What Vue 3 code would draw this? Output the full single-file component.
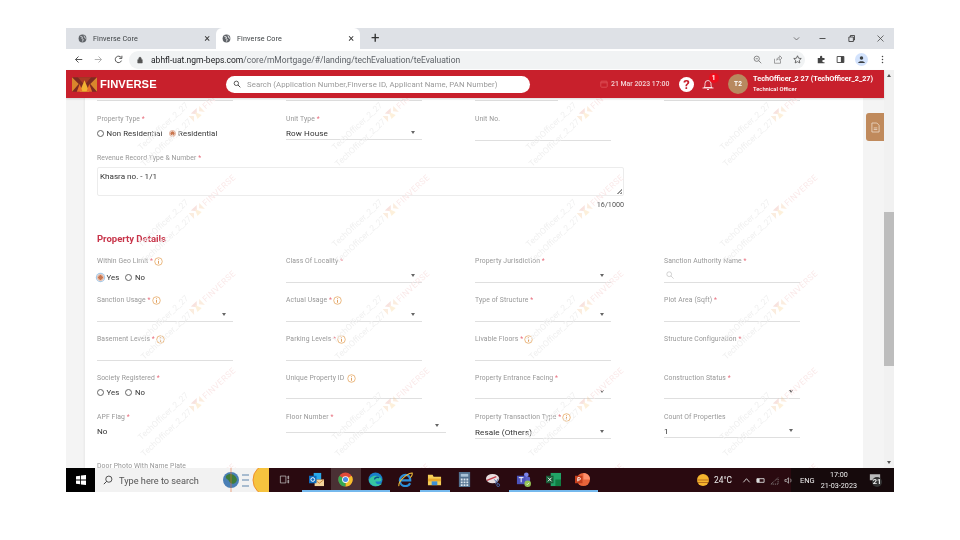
<template>
  <div class="shot">
    <div class="tabstrip">
      <div class="tab">
        <svg class="globe" viewBox="0 0 12 12"><circle cx="6" cy="6" r="5.2" fill="#5f6368" /><path d="M3 3l3 1-1 2 2 1-1 3M8 2l1 3 2 1" fill="none" stroke="#dee1e6" stroke-width="1.1" /></svg>
        <span class="tab-title">Finverse Core</span>
        <span class="tab-x">×</span>
      </div>
      <div class="tab active">
        <svg class="globe" viewBox="0 0 12 12"><circle cx="6" cy="6" r="5.2" fill="#5f6368" /><path d="M3 3l3 1-1 2 2 1-1 3M8 2l1 3 2 1" fill="none" stroke="#fff" stroke-width="1.1" /></svg>
        <span class="tab-title">Finverse Core</span>
        <span class="tab-x">×</span>
      </div>
      <span class="new-tab">+</span>
      <div class="win-ctrls">
        <svg viewBox="0 0 12 12"><path d="M2.5 4.5L6 8l3.5-3.5" fill="none" stroke="#555" /></svg>
        <svg viewBox="0 0 12 12"><path d="M2 6h8" stroke="#333" stroke-width="1.1" /></svg>
        <svg viewBox="0 0 12 12"><path d="M2.5 4h6v6h-6zM4.500 4V2h5.500v6H8.500" fill="none" stroke="#333" stroke-width="1.1" /></svg>
        <svg viewBox="0 0 12 12"><path d="M2 2l8 8M10 2l-8 8" stroke="#444" /></svg>
      </div>
    </div>

    <div class="toolbar">
      <svg class="nav" viewBox="0 0 12 12"><path d="M11 6H2M6 2L2 6l4 4" fill="none" stroke="#444" stroke-width="1.2" /></svg>
      <svg class="nav" viewBox="0 0 12 12"><path d="M1 6h9M6 2l4 4-4 4" fill="none" stroke="#aaa" stroke-width="1.2" /></svg>
      <svg class="nav" viewBox="0 0 12 12"><path d="M10 7.500A4.300 4.300 0 1 1 9.600 3.500M10.500 1v3.500H7" fill="none" stroke="#444" stroke-width="1.2" /></svg>
      <div class="omnibox">
        <svg class="lock" viewBox="0 0 8 10"><path d="M1 4.500h6V9H1zM2.300 4.500V3a1.700 1.700 0 0 1 3.400 0v1.500" fill="#555" stroke="#555" stroke-width=".7" /></svg>
        <span class="url"><b>abhfl-uat.ngm-beps.com</b>/core/mMortgage/#/landing/techEvaluation/teEvaluation</span>
        <span class="omni-icons">
          <svg viewBox="0 0 12 12"><circle cx="5" cy="5" r="3.500" fill="none" stroke="#666" /><path d="M7.500 7.500L11 11M3.500 5h3" stroke="#666" /></svg>
          <svg viewBox="0 0 12 12"><path d="M2 5v6h8V7M5 7c0-3 2-4 4-4V1l3 3-3 3V5C7 5 6 6 5 7z" fill="none" stroke="#777" stroke-width=".9" /></svg>
          <svg viewBox="0 0 12 12"><path d="M6 1l1.500 3.300 3.500.4-2.600 2.400.7 3.500L6 8.900 2.900 10.600l.7-3.500L1 4.700l3.500-.4z" fill="none" stroke="#444" stroke-width="1" /></svg>
        </span>
      </div>
      <span class="ext-icons">
        <svg viewBox="0 0 12 12"><path d="M1 4h3V2.500a1.500 1.500 0 0 1 3 0V4h3v2.500H8.500a1.500 1.500 0 0 0 0 3H10V11H1z" fill="#444" /></svg>
        <svg viewBox="0 0 12 12"><path d="M1.500 2h9v8h-9z" fill="none" stroke="#444" stroke-width="1.200" /><path d="M6.500 2h4v8h-4z" fill="#444" /></svg>
        <span class="profile"><svg viewBox="0 0 12 12"><circle cx="6" cy="4" r="2.300" fill="#3c4043" /><path d="M1.500 10.500c0-3 9-3 9 0z" fill="#3c4043" /></svg></span>
        <svg viewBox="0 0 12 12"><circle cx="6" cy="2" r="1" fill="#444" /><circle cx="6" cy="6" r="1" fill="#444" /><circle cx="6" cy="10" r="1" fill="#444" /></svg>
      </span>
    </div>

    <div class="viewport">
      <div class="app">
        <header class="topbar">
          <svg class="brand-logo" viewBox="0 0 26 15">
            <rect width="26" height="15" fill="#7d2a22" />
            <path d="M0 0l7 7-7 8zM26 0l-7 7 7 8z" fill="#d9862c" />
            <path d="M6 0h14l-7 8z" fill="#a93a24" />
            <path d="M13 3l5 12H8z" fill="#f2b233" />
            <path d="M5 15l3-8 3 8zM15 15l3-8 3 8z" fill="#e8702a" />
          </svg>
          <span class="brand-name">FINVERSE</span>
          <div class="searchbar">
            <svg viewBox="0 0 12 12"><circle cx="5" cy="5" r="3.300" fill="none" stroke="#444" stroke-width="1.300" /><path d="M7.500 7.500L11 11" stroke="#444" stroke-width="1.500" /></svg>
            <span>Search (Application Number,Finverse ID, Applicant Name, PAN Number)</span>
          </div>
          <div class="top-right">
            <svg class="cal" viewBox="0 0 10 10"><rect x="1" y="1.500" width="8" height="7.500" rx="1" fill="none" stroke="#e0555c" /><path d="M1 3.500h8" stroke="#e0555c" /></svg>
            <span class="stamp">21 Mar 2023 17:00</span>
            <span class="help">?</span>
            <span class="bell">
              <svg viewBox="0 0 14 14"><path d="M3 10.500c1-1 1-2 1-4a3 3 0 0 1 6 0c0 2 0 3 1 4zM1.500 11h11M6 12.500h2" fill="none" stroke="#fff" stroke-width=".8" /></svg>
              <i>1</i>
            </span>
            <span class="avatar">T2</span>
            <div class="who">
              <div class="who-name">TechOfficer_2 27 (TechOfficer_2_27)</div>
              <div class="who-role">Technical Officer</div>
            </div>
          </div>
        </header>

        <div class="scroller">
          <div class="card">
            <div class="cut-row">
              <span></span><span></span><span class="short"></span><span></span>
            </div>

            <div class="form-grid">
              <div class="field">
                <label>Property Type <em>*</em></label>
                <div class="radios">
                  <span class="radio"></span>Non Residential
                  <span class="radio on"></span>Residential
                </div>
              </div>
              <div class="field">
                <label>Unit Type <em>*</em></label>
                <div class="control select tight">Row House</div>
              </div>
              <div class="field">
                <label>Unit No.</label>
                <div class="control"></div>
              </div>
            </div>

            <div class="revenue">
              <label>Revenue Record Type &amp; Number <em>*</em></label>
              <div class="textbox">Khasra no. - 1/1<i class="grip"></i></div>
              <div class="count">16/1000</div>
            </div>

            <h3 class="section">Property Details</h3>

            <div class="form-grid">
              <div v-for="f in fields" :key="f.label" class="field">
                <label>{{ f.label }} <em v-if="f.req">*</em>
                  <svg v-if="f.info" class="info" viewBox="0 0 10 10"><circle cx="5" cy="5" r="4.200" fill="none" stroke="#e5a055" stroke-width=".8" /><path d="M5 2.500v.8M5 4.200v3.300" stroke="#d98a3a" stroke-width=".9" /></svg>
                </label>
                <div v-if="f.type === 'radio'" class="radios" :class="{ low: f.checked }">
                  <span class="radio" :class="{ focus: f.checked }"></span>Yes
                  <span class="radio"></span>No
                </div>
                <div v-else-if="f.type === 'plain'" class="plain">{{ f.value }}</div>
                <div v-else class="control" :class="[f.type, f.mod]">
                  <svg v-if="f.type === 'search'" class="lens" viewBox="0 0 10 10"><circle cx="4" cy="4" r="3" fill="none" stroke="#bbb" stroke-width=".8" /><path d="M6.200 6.200L9.500 9.500" stroke="#bbb" stroke-width=".8" /></svg>
                  {{ f.value }}
                </div>
              </div>
            </div>

            <label class="door">Door Photo With Name Plate</label>
          </div>

          <div class="side-rail">
            <button class="doc-tab">
              <svg viewBox="0 0 10 12"><path d="M1 1h5.500L9 3.500V11H1z" fill="none" stroke="#f3e4d6" stroke-width=".8" /><path d="M3 6.500h4M3 8.300h4" stroke="#f3e4d6" stroke-width=".8" /></svg>
            </button>
          </div>

          <div class="watermarks">
            <div v-for="m in marks" :key="m.key" class="mark" :style="{ left: m.x + 'px', top: m.y + 'px' }">
              <div class="mark-up">TechOfficer_2_27</div>
              <div class="mark-low">TechOfficer_2_27
                <svg viewBox="0 0 26 15"><path d="M0 0l7 7-7 8zM26 0l-7 7 7 8z" fill="#f0b070" /><path d="M6 0h14l-7 8z" fill="#e08070" /><path d="M13 3l5 12H8z" fill="#f7c060" /></svg>
                <span>FINVERSE</span>
              </div>
            </div>
          </div>
        </div>
      </div>

      <div class="scrollbar">
        <span class="arrow up"></span>
        <span class="thumb"></span>
        <span class="arrow down"></span>
      </div>
    </div>

    <footer class="taskbar">
      <div class="start">
        <svg viewBox="0 0 12 12"><path d="M0 1.500l5-.7v4.700H0zM6 .7L12 0v5.500H6zM0 6.500h5v4.700l-5-.7zM6 6.500h6V12l-6-.7z" fill="#fff" /></svg>
      </div>
      <div class="task-search">
        <svg viewBox="0 0 12 12"><circle cx="7" cy="5" r="3.700" fill="none" stroke="#333" /><path d="M4.300 7.700L1 11" stroke="#333" stroke-width="1.100" /></svg>
        <span>Type here to search</span>
        <svg class="banner" viewBox="0 0 46 24">
          <circle cx="8" cy="12" r="8" fill="#4a7fb5" />
          <path d="M3 8c3-3 7-2 9 0s3 5 0 7-5 0-6-2-4-2-3-5z" fill="#3f7d3a" />
          <path d="M8 0v24" stroke="#e8703a" stroke-width=".6" />
          <path d="M19 7h7M19 12h7M19 18h7" stroke="#8fa9c4" stroke-width="1.300" />
          <circle cx="46" cy="12" r="16" fill="#f6c33f" stroke="#ee8f2d" />
        </svg>
      </div>
      <div class="task-apps">
        <span v-for="a in apps" :key="a.id" class="app-slot" :class="{ running: a.running, current: a.id === 'chrome' }">
          <svg v-if="a.id === 'view'" class="small" viewBox="0 0 16 16"><path d="M2 3h8v10H2zM13 3h1v4h-1zM13 9h1v4h-1z" fill="none" stroke="#ccc" /></svg>
          <svg v-else-if="a.id === 'outlook'" viewBox="0 0 16 16"><rect x="5" y="1" width="8" height="7" fill="#28a8ea" /><rect x="6" y="8" width="10" height="7" fill="#f5d39b" /><path d="M6 8l5 4 5-4" fill="none" stroke="#c9863f" /><rect x="0" y="4" width="8" height="8" fill="#0f6cbd" /><circle cx="4" cy="8" r="2" fill="none" stroke="#fff" /></svg>
          <svg v-else-if="a.id === 'chrome'" viewBox="0 0 16 16"><circle cx="8" cy="8" r="7.500" fill="#e04a3a" /><path d="M8 8L14.500 4A7.500 7.500 0 0 1 8 15.500z" fill="#f6c02c" /><path d="M8 8L8 15.500A7.500 7.500 0 0 1 1.500 4z" fill="#35a853" /><circle cx="8" cy="8" r="3.600" fill="#fff" /><circle cx="8" cy="8" r="2.700" fill="#4a8be8" /></svg>
          <svg v-else-if="a.id === 'edge'" viewBox="0 0 16 16"><circle cx="8" cy="8" r="7.500" fill="#1a7fc9" /><path d="M1 9c1-5 10-7 13-2 1 2 0 3-2 3H8c0 3 4 4 7 2-2 4-12 5-14-3z" fill="#37c6a0" /><path d="M7 8c0-2 3-3 5-2" fill="none" stroke="#0a4f8f" stroke-width="1.500" /></svg>
          <svg v-else-if="a.id === 'ie'" viewBox="0 0 16 16"><path d="M2 9h11c0-4-2-6-5-6S2 6 2 9c0 4 3 6 6 6 2 0 4-1 5-3" fill="none" stroke="#2b8fd8" stroke-width="2.400" /><path d="M1 15C0 11 8 2 15 1c1 2-1 4-2 5" fill="none" stroke="#f2bf3a" stroke-width="1.100" /></svg>
          <svg v-else-if="a.id === 'files'" viewBox="0 0 16 16"><path d="M1 3h5l1 2h8v9H1z" fill="#f6cf57" /><rect x="1" y="7" width="14" height="3" fill="#e9a92c" /><rect x="5" y="10" width="6" height="4" fill="#3d8fd6" /></svg>
          <svg v-else-if="a.id === 'calc'" viewBox="0 0 16 16"><rect x="2" y="0" width="12" height="16" fill="#53718f" /><rect x="4" y="2" width="8" height="3" fill="#a9c2d8" /><path d="M4 7h2v2H4zM7 7h2v2H7zM10 7h2v2h-2zM4 10h2v2H4zM7 10h2v2H7zM10 10h2v2h-2zM4 13h2v2H4zM7 13h2v2H7zM10 13h2v2h-2z" fill="#dbe6ef" /></svg>
          <svg v-else-if="a.id === 'snip'" viewBox="0 0 16 16"><ellipse cx="7" cy="7" rx="7" ry="5" fill="#e9dfe0" /><path d="M1 9l10-4" stroke="#c63c4c" stroke-width="1.500" /><path d="M9 8l4 5M13 7l-3 6" stroke="#4866a8" /><circle cx="13" cy="14" r="1.500" fill="none" stroke="#4866a8" /></svg>
          <svg v-else-if="a.id === 'teams'" viewBox="0 0 16 16"><circle cx="11" cy="3" r="2.500" fill="#7b83eb" /><rect x="7" y="5" width="8" height="8" rx="1.500" fill="#5b5fc7" /><rect x="1" y="4" width="9" height="9" fill="#4b53bc" /><path d="M3 6h5M5.500 6v5" stroke="#fff" /><circle cx="12.500" cy="12.500" r="3.500" fill="#92c353" /><path d="M11 12.500l1 1 2-2" fill="none" stroke="#fff" stroke-width=".8" /></svg>
          <svg v-else-if="a.id === 'excel'" viewBox="0 0 16 16"><rect x="5" y="1" width="11" height="14" fill="#21a366" /><rect x="10" y="8" width="6" height="7" fill="#107c41" /><rect x="0" y="4" width="8" height="8" fill="#185c37" /><path d="M2 6l4 4M6 6l-4 4" stroke="#fff" /></svg>
          <svg v-else viewBox="0 0 16 16"><circle cx="9" cy="8" r="7" fill="#e8643a" /><path d="M9 1a7 7 0 0 1 7 7H9z" fill="#ff8f6b" /><rect x="0" y="4" width="8" height="8" fill="#c43e1c" /><path d="M3 10V6h1.500a1.200 1.200 0 0 1 0 2.500H3" fill="none" stroke="#fff" /></svg>
        </span>
      </div>
      <div class="tray">
        <svg class="sun" viewBox="0 0 14 12"><circle cx="7" cy="6" r="6" fill="#f5b52e" /><path d="M1 6h12M2 8.500h10" stroke="#b9711c" /></svg>
        <span class="temp">24°C</span>
        <svg viewBox="0 0 10 10"><path d="M1.500 7L5 3l3.500 4" fill="none" stroke="#ddd" /></svg>
        <svg viewBox="0 0 10 10"><path d="M1 3h8v4H1z" fill="none" stroke="#ddd" /><path d="M1 3h3v4H1z" fill="#ddd" /></svg>
        <svg viewBox="0 0 10 10"><path d="M1 9L9 2v7z" fill="none" stroke="#999" stroke-dasharray="1 1" /></svg>
        <svg viewBox="0 0 10 10"><path d="M1 4h2l2-2v6L3 6H1zM7 3c1 1 1 3 0 4" fill="none" stroke="#ccc" stroke-width=".8" /></svg>
        <span class="lang">ENG</span>
        <div class="clock"><div>17:00</div><div>21-03-2023</div></div>
        <span class="notify">
          <svg viewBox="0 0 14 12"><path d="M1 1h12v7H6l-2 3V8H1z" fill="#bbb" /></svg>
          <i>21</i>
        </span>
      </div>
    </footer>
  </div>
</template>

<script setup>
const fields = [
  { label: 'Within Geo Limit', req: true, info: true, type: 'radio', checked: true },
  { label: 'Class Of Locality', req: true, type: 'select' },
  { label: 'Property Jurisdiction', req: true, type: 'select' },
  { label: 'Sanction Authority Name', req: true, type: 'search' },
  { label: 'Sanction Usage', req: true, info: true, type: 'select' },
  { label: 'Actual Usage', req: true, info: true, type: 'select' },
  { label: 'Type of Structure', req: true, type: 'select' },
  { label: 'Plot Area (Sqft)', req: true, type: 'input' },
  { label: 'Basement Levels', req: true, info: true, type: 'input' },
  { label: 'Parking Levels', req: true, info: true, type: 'input' },
  { label: 'Livable Floors', req: true, info: true, type: 'input' },
  { label: 'Structure Configuration', req: true, type: 'blank' },
  { label: 'Society Registered', req: true, type: 'radio' },
  { label: 'Unique Property ID', info: true, type: 'input', mod: 'tight' },
  { label: 'Property Entrance Facing', req: true, type: 'select', mod: 'tight' },
  { label: 'Construction Status', req: true, type: 'select', mod: 'tight' },
  { label: 'APF Flag', req: true, type: 'plain', value: 'No' },
  { label: 'Floor Number', req: true, type: 'select', mod: 'wide' },
  { label: 'Property Transaction Type', req: true, info: true, type: 'select', value: 'Resale (Others)' },
  { label: 'Count Of Properties', type: 'select', mod: 'tight', value: '1' }
]

const apps = [
  { id: 'view' },
  { id: 'outlook', running: true },
  { id: 'chrome', running: true },
  { id: 'edge', running: true },
  { id: 'ie' },
  { id: 'files', running: true },
  { id: 'calc' },
  { id: 'snip' },
  { id: 'teams', running: true },
  { id: 'excel', running: true },
  { id: 'ppt', running: true }
]

// watermark repeats every 194 x 97 across the scrolling area
const marks = []
for (let row = 0; row < 5; row++) {
  for (let col = 0; col < 4; col++) {
    marks.push({ key: row + '-' + col, x: col * 194 + 46, y: row * 96.5 - 5 })
  }
}
</script>

<style>
html, body {
  margin: 0;
  background: #fff;
}
</style>

<style scoped>
.shot {
  width: 828px;
  height: 464px;
  margin: 28px 0 0 66px;
  overflow: hidden;
  display: flex;
  flex-direction: column;
  font-family: Roboto, "Liberation Sans", sans-serif;
  filter: blur(0.45px);
  background: #fff;
}

/* browser chrome */
.tabstrip {
  height: 21px;
  flex: none;
  background: #dee1e6;
  display: flex;
  align-items: flex-end;
  padding-left: 6px;
  color: #3c4043;
}
.tab {
  width: 144px;
  height: 21px;
  display: flex;
  align-items: center;
  padding: 0 6px 0 6px;
  box-sizing: border-box;
  border-radius: 6px 6px 0 0;
}
.tab.active {
  background: #fff;
}
.globe {
  width: 9px;
  height: 9px;
  margin-right: 6px;
}
.tab-title {
  flex: 1;
  font-size: 7.2px;
  letter-spacing: 0.1px;
}
.tab-x {
  font-size: 11px;
  line-height: 11px;
  color: #333;
}
.new-tab {
  align-self: center;
  margin-left: 11px;
  font-size: 15px;
  line-height: 15px;
  color: #333;
}
.win-ctrls {
  margin-left: auto;
  align-self: center;
  display: flex;
  gap: 20px;
  padding-right: 9px;
}
.win-ctrls svg {
  width: 9px;
  height: 9px;
}
.win-ctrls svg:first-child {
  margin-right: -3px;
}

.toolbar {
  height: 21px;
  flex: none;
  background: #fff;
  display: flex;
  align-items: center;
  padding-left: 8px;
  box-sizing: border-box;
}
.nav {
  width: 9px;
  height: 9px;
  margin-right: 11px;
}
.omnibox {
  width: 676px;
  height: 18px;
  margin-left: -5px;
  background: #f1f3f4;
  border-radius: 9px;
  display: flex;
  align-items: center;
  padding: 0 0 0 8px;
  box-sizing: border-box;
}
.lock {
  width: 6px;
  height: 8px;
  margin-right: 8px;
}
.url {
  font-size: 8.5px;
  color: #5f6368;
}
.url b {
  font-weight: 400;
  color: #202124;
}
.omni-icons {
  margin-left: auto;
  display: flex;
  gap: 11px;
  padding-right: 3px;
}
.omni-icons svg {
  width: 9px;
  height: 9px;
}
.ext-icons {
  display: flex;
  align-items: center;
  gap: 10px;
  margin-left: 11.5px;
}
.ext-icons > svg {
  width: 9px;
  height: 9px;
}
.profile {
  width: 13px;
  height: 13px;
  border-radius: 50%;
  background: #d3e3fd;
  display: flex;
  align-items: center;
  justify-content: center;
}
.profile svg {
  width: 9px;
  height: 9px;
}

/* page */
.viewport {
  flex: 1;
  display: flex;
  min-height: 0;
}
.app {
  flex: 1;
  display: flex;
  flex-direction: column;
  min-width: 0;
}
.scrollbar {
  width: 10px;
  flex: none;
  background: #f1f1f1;
  position: relative;
}
.thumb {
  position: absolute;
  left: 0;
  right: 0;
  top: 142px;
  height: 154px;
  background: #bdbdbd;
}
.arrow {
  position: absolute;
  left: 2.5px;
  border-left: 2.5px solid transparent;
  border-right: 2.5px solid transparent;
}
.arrow.up {
  top: 4px;
  border-bottom: 3px solid #555;
}
.arrow.down {
  bottom: 4px;
  border-top: 3px solid #555;
}

.topbar {
  height: 28px;
  flex: none;
  background: #c8202c;
  display: flex;
  align-items: center;
  padding-left: 6px;
  color: #fff;
  box-shadow: 0 1px 2px rgba(0, 0, 0, 0.15);
  position: relative;
  z-index: 3;
}
.brand-logo {
  width: 25px;
  height: 15px;
}
.brand-name {
  width: 126px;
  margin-left: 3px;
  font-family: "Liberation Sans", sans-serif;
  font-weight: 700;
  font-size: 11.2px;
  letter-spacing: 0.1px;
}
.searchbar {
  width: 304px;
  height: 17px;
  background: #fff;
  border-radius: 9px;
  display: flex;
  align-items: center;
  padding-left: 7px;
  box-sizing: border-box;
  color: #999;
  font-size: 7.8px;
  letter-spacing: 0.06px;
}
.searchbar svg {
  width: 8px;
  height: 8px;
  margin-right: 6px;
}
.top-right {
  display: flex;
  align-items: center;
  margin-left: 70px;
}
.cal {
  width: 8px;
  height: 8px;
  margin-right: 3px;
}
.stamp {
  width: 57px;
  font-size: 6.9px;
  font-weight: 500;
  color: #f3d4d6;
  white-space: nowrap;
}
.help {
  width: 15px;
  height: 15px;
  border-radius: 50%;
  background: #fff;
  color: #c8202c;
  font-size: 13px;
  font-weight: 700;
  line-height: 15px;
  text-align: center;
  margin-left: 11px;
}
.bell {
  position: relative;
  width: 14px;
  height: 14px;
  margin-left: 7px;
}
.bell svg {
  width: 14px;
  height: 14px;
  display: block;
}
.bell i {
  position: absolute;
  left: 7.5px;
  top: -4px;
  width: 10px;
  height: 10px;
  border-radius: 50%;
  background: #ee0d1c;
  font-style: normal;
  font-size: 6.5px;
  font-weight: 700;
  line-height: 10px;
  text-align: center;
}
.avatar {
  width: 20px;
  height: 20px;
  border-radius: 50%;
  background: #b8895f;
  font-size: 6.5px;
  font-weight: 700;
  line-height: 20px;
  text-align: center;
  margin-left: 13px;
}
.who {
  margin-left: 5px;
  white-space: nowrap;
}
.who-name {
  font-size: 7.3px;
  font-weight: 700;
  line-height: 10px;
}
.who-role {
  font-size: 5.8px;
  font-weight: 500;
  line-height: 9px;
  margin-top: 1px;
}

.scroller {
  flex: 1;
  min-height: 0;
  display: flex;
  background: #f4f4f4;
  padding-left: 19px;
  position: relative;
  overflow: hidden;
}
.card {
  width: 778px;
  flex: none;
  background: #fff;
  padding: 0 12px;
  box-sizing: border-box;
  box-shadow: -1px 0 2px rgba(0, 0, 0, 0.05);
}
.side-rail {
  flex: 1;
  padding-top: 15px;
}
.doc-tab {
  display: block;
  width: 18px;
  height: 28px;
  margin-left: 3px;
  padding: 0;
  border: 0;
  border-radius: 3px 0 0 3px;
  background: #c08a5c;
}
.doc-tab svg {
  width: 9px;
  height: 11px;
  display: block;
  margin: 0 auto;
}

.cut-row {
  display: grid;
  grid-template-columns: repeat(4, 136px);
  column-gap: 53px;
  height: 3px;
  margin-bottom: 11px;
}
.cut-row span {
  border-bottom: 1px solid #dedede;
}
.cut-row .short {
  width: 83px;
}

.form-grid {
  display: grid;
  grid-template-columns: repeat(4, 136px);
  column-gap: 53px;
  grid-auto-rows: 39px;
}
label {
  display: block;
  height: 14px;
  font-size: 6.8px;
  line-height: 14px;
  color: #979797;
  letter-spacing: 0.1px;
  white-space: nowrap;
}
label em {
  color: #e8707f;
  font-style: normal;
}
.info {
  width: 9px;
  height: 9px;
  vertical-align: -2.5px;
  margin-left: 1px;
}
.control {
  height: 14px;
  border-bottom: 1px solid #dfdfdf;
  position: relative;
  font-size: 8.1px;
  line-height: 14px;
  color: #333;
  letter-spacing: 0.1px;
}
.control.select {
  padding-top: 1px;
  height: 13px;
}
.control.select::after {
  content: "";
  position: absolute;
  right: 7px;
  top: 6px;
  border-left: 2px solid transparent;
  border-right: 2px solid transparent;
  border-top: 3px solid #666;
}
.control.blank {
  border-bottom: 0;
}
.control.tight {
  margin-top: -1px;
}
.control.wide {
  width: 160px;
  margin-top: -6px;
}
.lens {
  width: 8px;
  height: 8px;
  position: absolute;
  left: 2px;
  top: 3px;
}
.radios {
  display: flex;
  align-items: center;
  height: 14px;
  font-size: 7.8px;
  color: #333;
  letter-spacing: 0.1px;
}
.radios.low {
  margin-top: 2px;
}
.radio {
  width: 7px;
  height: 7px;
  box-sizing: border-box;
  border: 0.6px solid #666;
  border-radius: 50%;
  margin-right: 2.5px;
  background: #fff;
  flex: none;
}
.radios .radio:not(:first-child) {
  margin-left: 6px;
}
.radio.on,
.radio.focus {
  background: radial-gradient(circle, #c9764f 0 1.8px, #fbeee6 2.4px);
  border-color: #e0ad98;
}
.radio.focus {
  box-shadow: 0 0 0 1.2px #a8cbe8;
  background: radial-gradient(circle, #c9764f 0 2px, #f3e6da 2.6px);
}
.plain {
  height: 14px;
  line-height: 14px;
  font-size: 8.1px;
  color: #333;
}

.revenue {
  height: 59px;
}
.textbox {
  width: 527px;
  height: 29px;
  margin-top: 2px;
  box-sizing: border-box;
  border: 1px solid #ececec;
  border-radius: 2px;
  padding: 3px 2px;
  font-size: 8.1px;
  line-height: 11px;
  color: #333;
  position: relative;
}
.grip {
  position: absolute;
  right: 1px;
  bottom: 1px;
  width: 5px;
  height: 5px;
  background: linear-gradient(135deg, transparent 50%, #999 50% 62%, transparent 62% 78%, #999 78%);
}
.count {
  width: 527px;
  margin-top: 4px;
  text-align: right;
  font-size: 7.2px;
  line-height: 10px;
  color: #555;
}
.section {
  margin: 23px 0 9px;
  font-size: 9.5px;
  line-height: 12px;
  font-weight: 700;
  color: #c8354a;
}
.door {
  margin-top: 10px;
}

/* overlay: diagonal user watermark */
.watermarks {
  position: absolute;
  inset: 0;
  overflow: hidden;
  pointer-events: none;
}
.mark {
  position: absolute;
  width: 170px;
  height: 44px;
  transform: rotate(-43deg);
  font-size: 8.5px;
  line-height: 14px;
  color: #f0f0f0;
  white-space: nowrap;
}
.mark-up {
  height: 14px;
  padding-left: 20px;
}
.mark-low {
  height: 14px;
  padding-left: 11px;
  display: flex;
  align-items: center;
}
.mark-low svg {
  width: 15px;
  height: 10px;
  margin: 0 2px;
  opacity: 0.22;
}
.mark-low span {
  color: #fae9e9;
  letter-spacing: 0.4px;
}

/* windows taskbar */
.taskbar {
  height: 24px;
  flex: none;
  background: #2a0a10;
  display: flex;
  align-items: stretch;
  color: #eee;
  position: relative;
  z-index: 4;
}
.start {
  width: 29px;
  background: #000;
  display: flex;
  align-items: center;
  justify-content: center;
}
.start svg {
  width: 10px;
  height: 10px;
}
.task-search {
  width: 174px;
  background: #f2f2f2;
  display: flex;
  align-items: center;
  padding-left: 8px;
  box-sizing: border-box;
  color: #555;
  font-size: 9.2px;
  position: relative;
  overflow: hidden;
}
.task-search > svg:first-child {
  width: 10px;
  height: 10px;
  margin-right: 6px;
}
.banner {
  width: 46px;
  height: 24px;
  position: absolute;
  right: 0;
  top: 0;
}
.task-apps {
  display: flex;
  padding-left: 3px;
}
.app-slot {
  width: 29.6px;
  display: flex;
  align-items: center;
  justify-content: center;
  box-sizing: border-box;
  border-bottom: 2px solid transparent;
}
.app-slot svg {
  width: 15px;
  height: 15px;
}
.app-slot svg.small {
  width: 11px;
  height: 11px;
  margin-left: -4px;
}
.app-slot.running {
  border-bottom-color: #76b9ed;
}
.app-slot.current {
  background: #4a3034;
}
.tray {
  margin-left: auto;
  display: flex;
  align-items: center;
  font-size: 8px;
  padding-right: 11px;
  background: linear-gradient(90deg, #2a0a10 0 48%, #160a0c 48%);
}
.tray > svg {
  width: 9px;
  height: 9px;
  margin-right: 5px;
}
.tray > .sun {
  width: 14px;
  height: 12px;
  margin-right: 4px;
}
.temp {
  font-size: 8.4px;
  margin-right: 10px;
}
.lang {
  font-size: 7.5px;
  margin-left: 2px;
}
.clock {
  margin-left: 6px;
  text-align: center;
  font-size: 7.2px;
  line-height: 11px;
}
.notify {
  position: relative;
  margin-left: 12px;
  width: 14px;
  height: 14px;
}
.notify svg {
  width: 12px;
  height: 11px;
}
.notify i {
  position: absolute;
  left: 3px;
  top: 4px;
  font-style: normal;
  font-size: 7.5px;
  font-weight: 700;
  width: 10px;
  height: 10px;
  line-height: 10px;
  text-align: center;
  border-radius: 50%;
  background: #333;
}
</style>
